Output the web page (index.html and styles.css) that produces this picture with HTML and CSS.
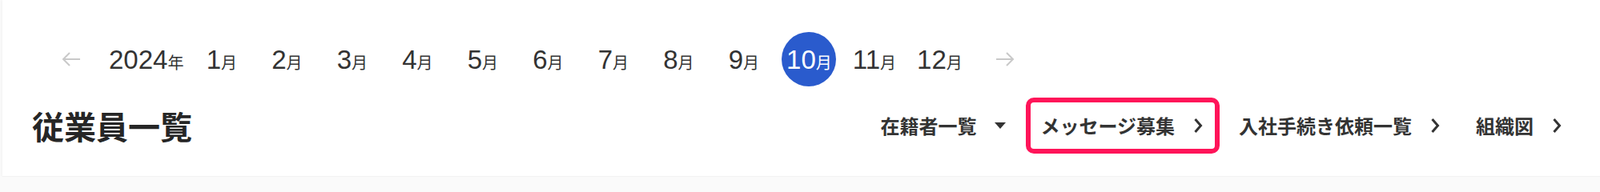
FILE: index.html
```html
<!DOCTYPE html>
<html lang="ja">
<head>
<meta charset="utf-8">
<title>従業員一覧</title>
<link rel="stylesheet" href="styles.css">
</head>
<body>
<div class="card">
  <div class="months">
    <span class="nav-arrow">
      <svg width="24" height="20" viewBox="0 0 24 20"><path d="M23 10 H2 M10 2 L2 10 L10 18" fill="none" stroke="#c9c9c9" stroke-width="2"/></svg>
    </span>
    <span class="year">2024<small>年</small></span>
    <span class="month">1<small>月</small></span>
    <span class="month">2<small>月</small></span>
    <span class="month">3<small>月</small></span>
    <span class="month">4<small>月</small></span>
    <span class="month">5<small>月</small></span>
    <span class="month">6<small>月</small></span>
    <span class="month">7<small>月</small></span>
    <span class="month">8<small>月</small></span>
    <span class="month">9<small>月</small></span>
    <span class="month active">10<small>月</small></span>
    <span class="month">11<small>月</small></span>
    <span class="month">12<small>月</small></span>
    <span class="nav-arrow">
      <svg width="24" height="20" viewBox="0 0 24 20"><path d="M1 10 H22 M14 2 L22 10 L14 18" fill="none" stroke="#c9c9c9" stroke-width="2"/></svg>
    </span>
  </div>
  <div class="header">
    <h1 class="title">従業員一覧</h1>
    <nav class="links">
      <a class="link">在籍者一覧<svg class="icon" width="16" height="24" viewBox="0 0 16 24"><polygon points="1,8 15,8 8,16" fill="#333"/></svg></a>
      <a class="link highlighted">メッセージ募集<svg class="icon" width="16" height="24" viewBox="0 0 16 24"><polyline points="3.5,4 10.5,12 3.5,20" fill="none" stroke="#333" stroke-width="3"/></svg></a>
      <a class="link">入社手続き依頼一覧<svg class="icon" width="16" height="24" viewBox="0 0 16 24"><polyline points="3.5,4 10.5,12 3.5,20" fill="none" stroke="#333" stroke-width="3"/></svg></a>
      <a class="link">組織図<svg class="icon" width="16" height="24" viewBox="0 0 16 24"><polyline points="3.5,4 10.5,12 3.5,20" fill="none" stroke="#333" stroke-width="3"/></svg></a>
    </nav>
  </div>
</div>
</body>
</html>
```

FILE: styles.css
```css
html, body {
  margin: 0;
  padding: 0;
}
body {
  background: #fafafa;
  font-family: "Liberation Sans", "Noto Sans CJK JP", sans-serif;
  color: #333;
  overflow: hidden;
}
.card {
  margin-left: 3px;
  height: 221px;
  box-sizing: border-box;
  background: #fff;
  padding: 40px 27px 0 37px;
  border-bottom: 1px solid #f2f2f2;
  box-shadow: -1px 0 3px rgba(0, 0, 0, 0.03);
}
.months {
  display: flex;
  align-items: center;
  gap: 13.5px;
  margin-left: 14.5px;
  height: 68px;
}
.nav-arrow {
  width: 68px;
  height: 68px;
  display: flex;
  align-items: center;
  justify-content: center;
}
.nav-arrow svg {
  display: block;
}
.year,
.month {
  font-size: 33px;
  line-height: 1;
  color: #333;
  white-space: nowrap;
}
.year small,
.month small {
  font-size: 20px;
  font-family: "Noto Sans CJK JP", sans-serif;
}
.month {
  width: 68px;
  height: 68px;
  border-radius: 50%;
  display: flex;
  align-items: center;
  justify-content: center;
}
.month small {
  align-self: center;
  margin-top: 8px;
}
.year {
  display: flex;
  align-items: center;
}
.year small {
  margin-top: 8px;
}
.month.active {
  background: #2a5bcd;
  color: #fff;
}
.header {
  margin-top: 14px;
  height: 70px;
  display: flex;
  align-items: center;
  justify-content: space-between;
}
.title {
  margin: 0;
  font-family: "Noto Sans CJK JP", sans-serif;
  font-size: 40px;
  font-weight: 700;
  line-height: 1;
  color: #262626;
}
.links {
  display: flex;
  align-items: center;
  gap: 6px;
}
.link {
  position: relative;
  display: flex;
  align-items: center;
  height: 70px;
  padding: 0 18px;
  box-sizing: border-box;
  font-family: "Noto Sans CJK JP", sans-serif;
  font-size: 24px;
  font-weight: 700;
  line-height: 1;
  color: #333;
  text-decoration: none;
  white-space: nowrap;
}
.link .icon {
  display: block;
  margin-left: 22px;
  flex: none;
}
.link.highlighted::after {
  content: "";
  position: absolute;
  inset: 0;
  border: 6px solid #ff1459;
  border-radius: 10px;
  pointer-events: none;
}
```
